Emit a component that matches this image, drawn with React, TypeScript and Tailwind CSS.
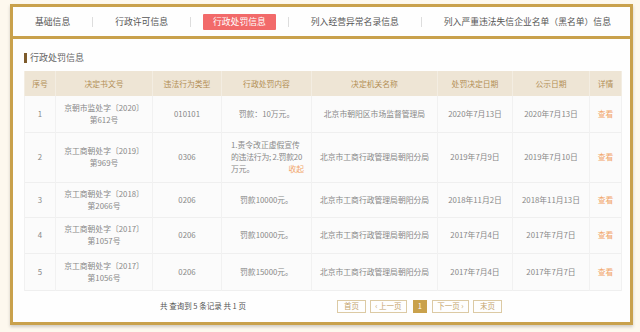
import React from "react";

const gold = "border-[#c9a14c]";

const tabs = ["基础信息", "行政许可信息", "行政处罚信息", "列入经营异常名录信息", "列入严重违法失信企业名单（黑名单）信息"];

type Row = {
  no: string;
  doc: [string, string];
  type: string;
  content: React.ReactNode;
  org: string;
  d1: string;
  d2: string;
  h: string;
};

const rows: Row[] = [
  { no: "1", doc: ["京朝市监处字〔2020〕", "第612号"], type: "010101", content: "罚款：10万元。", org: "北京市朝阳区市场监督管理局", d1: "2020年7月13日", d2: "2020年7月13日", h: "h-[36px]" },
  {
    no: "2",
    doc: ["京工商朝处字〔2019〕", "第969号"],
    type: "0306",
    content: (
      <div className="text-left pl-[9px] pr-[7px] whitespace-nowrap">
        <div>1.责令改正虚假宣传</div>
        <div className="tracking-[-0.2px]">的违法行为; 2.罚款20</div>
        <div className="flex justify-between">
          <span>万元。</span>
          <span className="text-[#f2a66a]">收起</span>
        </div>
      </div>
    ),
    org: "北京市工商行政管理局朝阳分局",
    d1: "2019年7月9日",
    d2: "2019年7月10日",
    h: "h-[50px]",
  },
  { no: "3", doc: ["京工商朝处字〔2018〕", "第2066号"], type: "0206", content: "罚款10000元。", org: "北京市工商行政管理局朝阳分局", d1: "2018年11月2日", d2: "2018年11月13日", h: "h-[35px]" },
  { no: "4", doc: ["京工商朝处字〔2017〕", "第1057号"], type: "0206", content: "罚款10000元。", org: "北京市工商行政管理局朝阳分局", d1: "2017年7月4日", d2: "2017年7月7日", h: "h-[36px]" },
  { no: "5", doc: ["京工商朝处字〔2017〕", "第1056号"], type: "0206", content: "罚款15000元。", org: "北京市工商行政管理局朝阳分局", d1: "2017年7月4日", d2: "2017年7月7日", h: "h-[37px]" },
];

const headers = ["序号", "决定书文号", "违法行为类型", "行政处罚内容", "决定机关名称", "处罚决定日期", "公示日期", "详情"];
const widths = [31, 97, 69, 90, 126, 75, 77, 32];

export default function App() {
  return (
    <div
      className="w-[640px] h-[332px] bg-[#fdf8ee] pt-[4px] pl-[10px] overflow-hidden"
      style={{ fontFamily: '"Noto Sans CJK SC", "Noto Sans", sans-serif' }}
    >
      <div className={`w-[623px] border-[3px] ${gold} bg-[#fefefe] shadow-[0_2px_3px_rgba(0,0,0,0.18)]`}>
        {/* tabs */}
        <div className={`h-[32px] border-b-[3px] ${gold} flex items-center text-[8.8px] text-[#555] whitespace-nowrap`}>
          {tabs.map((t, i) => (
            <React.Fragment key={t}>
              {i > 0 && <div className="w-px h-[10px] bg-[#dddddd] shrink-0" />}
              <div className="px-[12px] flex items-center shrink-0">
                <span
                  className={`px-[10px] h-[16px] leading-[16px] ${
                    i === 2 ? "bg-[#f26a6a] text-white rounded-[1px]" : ""
                  }`}
                >
                  {t}
                </span>
              </div>
            </React.Fragment>
          ))}
        </div>

        {/* content */}
        <div className="pt-[13px] pl-[11px] pr-[9px]">
          <div className="flex items-center h-[12px] mb-[7px]">
            <div className="w-[3px] h-[10px] bg-[#7d5b2c] mr-[3px]" />
            <span className="text-[9px] leading-[12px] text-[#666]">行政处罚信息</span>
          </div>

          <table className="table-fixed border-collapse w-[597px] text-[7.8px] leading-[12px]">
            <colgroup>
              {widths.map((w, i) => (
                <col key={i} style={{ width: w }} />
              ))}
            </colgroup>
            <thead>
              <tr className="h-[25px] bg-[#eee5d5]">
                {headers.map((h) => (
                  <th key={h} className="font-normal text-[#b38f55] border-x border-[#f3ede2] text-center whitespace-nowrap">
                    {h}
                  </th>
                ))}
              </tr>
            </thead>
            <tbody>
              {rows.map((r) => (
                <tr key={r.no} className={`${r.h} bg-[#fbfbfb] border-b border-[#efefef] text-[#888]`}>
                  <td className="text-center border-x border-[#f1f1f1]">{r.no}</td>
                  <td className="text-center border-x border-[#f1f1f1] whitespace-nowrap">
                    <div>{r.doc[0]}</div>
                    <div>{r.doc[1]}</div>
                  </td>
                  <td className="text-center border-x border-[#f1f1f1]">{r.type}</td>
                  <td className="text-center border-x border-[#f1f1f1]">{r.content}</td>
                  <td className="text-center border-x border-[#f1f1f1] whitespace-nowrap">{r.org}</td>
                  <td className="text-center border-x border-[#f1f1f1] whitespace-nowrap">{r.d1}</td>
                  <td className="text-center border-x border-[#f1f1f1] whitespace-nowrap">{r.d2}</td>
                  <td className="text-center border-x border-[#f1f1f1] text-[#f2a66a]">查看</td>
                </tr>
              ))}
            </tbody>
          </table>

          <div className="h-[31px] flex items-center text-[7.5px]">
            <div className="ml-[136px] text-[#555] whitespace-pre">共 查询到 5 条记录 共 1 页</div>
            <div className="ml-[91px] flex items-center gap-[4px] text-[#c4a46c] whitespace-nowrap">
              <span className="h-[13px] w-[29px] border border-[#dccaa4] flex items-center justify-center">首页</span>
              <span className="h-[13px] w-[37px] border border-[#dccaa4] flex items-center justify-center">‹ 上一页</span>
              <span className="h-[13px] w-[14px] bg-[#c9a14c] text-white flex items-center justify-center ml-[2px] mr-[1px]">1</span>
              <span className="h-[13px] w-[37px] border border-[#dccaa4] flex items-center justify-center">下一页 ›</span>
              <span className="h-[13px] w-[29px] border border-[#dccaa4] flex items-center justify-center">末页</span>
            </div>
          </div>
        </div>
      </div>
    </div>
  );
}
